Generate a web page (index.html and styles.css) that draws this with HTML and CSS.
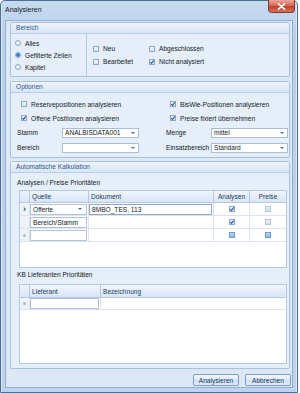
FILE: index.html
```html
<!DOCTYPE html>
<html lang="de">
<head>
  <meta charset="UTF-8" />
  <title>Analysieren</title>
  <link rel="stylesheet" href="styles.css">
</head>
<body>
  <div class="window">
    <div class="titlebar">
      <span class="title">Analysieren</span>
      <span class="close">
        <svg width="9" height="7" viewBox="0 0 9 7"><path d="M1.5 0.8 L7.5 6.2 M7.5 0.8 L1.5 6.2" stroke="#fff" stroke-width="1.6" stroke-linecap="round"/></svg>
      </span>
    </div>

    <div class="client">
      <!-- Bereich -->
      <section class="group g-bereich">
        <div class="group-head">Bereich</div>
        <div class="bereich-body">
          <div class="radios">
            <div class="opt"><span class="radio"></span>Alles</div>
            <div class="opt"><span class="radio on"></span>Gefilterte Zeilen</div>
            <div class="opt"><span class="radio"></span>Kapitel</div>
          </div>
          <div class="checks">
            <div class="opt"><span class="cb"></span>Neu</div>
            <div class="opt"><span class="cb"></span>Abgeschlossen</div>
            <div class="opt"><span class="cb"></span>Bearbeitet</div>
            <div class="opt"><span class="cb on"><svg width="6" height="6" viewBox="0 0 6 6"><path d="M1.2 3 L2.5 4.4 L4.9 1.3" fill="none" stroke="#2d5a97" stroke-width="1.1"/></svg></span>Nicht analysiert</div>
          </div>
        </div>
      </section>

      <!-- Optionen -->
      <section class="group g-optionen">
        <div class="group-head">Optionen</div>
        <div class="optionen-body">
          <div class="col">
            <div class="opt row-check"><span class="cb"></span>Reservepositionen analysieren</div>
            <div class="opt row-check"><span class="cb on"><svg width="6" height="6" viewBox="0 0 6 6"><path d="M1.2 3 L2.5 4.4 L4.9 1.3" fill="none" stroke="#2d5a97" stroke-width="1.1"/></svg></span>Offene Positionen analysieren</div>
            <div class="row-field"><span class="lbl">Stamm</span><span class="combo"><span class="val">ANALBISDATA001</span><span class="arrow"></span></span></div>
            <div class="row-field"><span class="lbl">Bereich</span><span class="combo"><span class="val"></span><span class="arrow"></span></span></div>
          </div>
          <div class="col">
            <div class="opt row-check"><span class="cb on"><svg width="6" height="6" viewBox="0 0 6 6"><path d="M1.2 3 L2.5 4.4 L4.9 1.3" fill="none" stroke="#2d5a97" stroke-width="1.1"/></svg></span>BisWie-Positionen analysieren</div>
            <div class="opt row-check"><span class="cb on"><svg width="6" height="6" viewBox="0 0 6 6"><path d="M1.2 3 L2.5 4.4 L4.9 1.3" fill="none" stroke="#2d5a97" stroke-width="1.1"/></svg></span>Preise fixiert übernehmen</div>
            <div class="row-field"><span class="lbl">Menge</span><span class="combo"><span class="val">mittel</span><span class="arrow"></span></span></div>
            <div class="row-field"><span class="lbl">Einsatzbereich</span><span class="combo"><span class="val">Standard</span><span class="arrow"></span></span></div>
          </div>
        </div>
      </section>

      <!-- Automatische Kalkulation -->
      <section class="group g-auto">
        <div class="group-head">Automatische Kalkulation</div>
        <div class="auto-body">
          <div class="caption">Analysen / Preise Prioritäten</div>
          <div class="grid grid-prio">
            <div class="grow head">
              <span class="c"></span><span class="c">Quelle</span><span class="c">Dokument</span><span class="c mid">Analysen</span><span class="c mid">Preise</span>
            </div>
            <div class="grow">
              <span class="c ind">&#x203A;</span>
              <span class="c"><span class="edit">Offerte<span class="arrow"></span></span></span>
              <span class="c"><span class="edit focus">8MBO_TES, 113</span></span>
              <span class="c mid"><span class="cb on"><svg width="6" height="6" viewBox="0 0 6 6"><path d="M1.2 3 L2.5 4.4 L4.9 1.3" fill="none" stroke="#2d5a97" stroke-width="1.1"/></svg></span></span>
              <span class="c mid"><span class="cb off"></span></span>
            </div>
            <div class="grow">
              <span class="c ind"></span>
              <span class="c"><span class="edit">Bereich/Stamm</span></span>
              <span class="c"></span>
              <span class="c mid"><span class="cb on"><svg width="6" height="6" viewBox="0 0 6 6"><path d="M1.2 3 L2.5 4.4 L4.9 1.3" fill="none" stroke="#2d5a97" stroke-width="1.1"/></svg></span></span>
              <span class="c mid"><span class="cb off"></span></span>
            </div>
            <div class="grow">
              <span class="c ind"><span class="dot"></span></span>
              <span class="c"><span class="edit"></span></span>
              <span class="c"></span>
              <span class="c mid"><span class="cb new"></span></span>
              <span class="c mid"><span class="cb new"></span></span>
            </div>
          </div>

          <div class="caption caption-2">KB Lieferanten Prioritäten</div>
          <div class="grid grid-lief">
            <div class="grow head">
              <span class="c"></span><span class="c">Lieferant</span><span class="c">Bezeichnung</span>
            </div>
            <div class="grow">
              <span class="c ind"><span class="dot"></span></span>
              <span class="c"><span class="edit"></span></span>
              <span class="c"></span>
            </div>
          </div>
        </div>
      </section>

      <div class="buttons">
        <button>Analysieren</button>
        <button>Abbrechen</button>
      </div>
    </div>
  </div>
</body>
</html>
```

FILE: styles.css
```css
* {
  box-sizing: border-box;
}

body {
  margin: 0;
  background: #ffffff;
  font-family: 'Liberation Sans', Arial, sans-serif;
  font-size: 6.6px;
  color: #141b26;
}

.window {
  width: 298px;
  height: 393px;
  display: flex;
  flex-direction: column;
  padding: 0 4px 4px 4px;
  border: 1px solid #4f6d94;
  border-radius: 5px 5px 0 0;
  background: linear-gradient(#c6daf0, #b9d0ea 40px, #bed4ec);
  box-shadow: inset 1px 0 0 #d9e7f6, inset -1px 0 0 #d9e7f6;
}

.titlebar {
  height: 19px;
  display: flex;
  justify-content: space-between;
  align-items: flex-start;
}

.title {
  padding-top: 5px;
  font-size: 7px;
  color: #141b26;
}

.close {
  width: 27px;
  height: 13px;
  margin-top: -1px;
  margin-right: -2px;
  display: flex;
  align-items: center;
  justify-content: center;
  border: 1px solid #7d3a33;
  border-top: none;
  border-radius: 0 0 4px 4px;
  background: linear-gradient(#e9a89b, #d2624e 50%, #c3402a 55%, #d9715b);
}

.client {
  flex: 1;
  display: flex;
  flex-direction: column;
  padding: 1px 2px 0 4px;
  border: 1px solid #94afd2;
  background: #dce8f6;
}

/* group boxes */
.group {
  border: 1px solid #a9c1e0;
  border-radius: 2px;
  background: #e5eefa;
}

.group-head {
  height: 11px;
  padding-left: 5px;
  line-height: 10px;
  color: #34588a;
  border-bottom: 1px solid #b9cde7;
  background: linear-gradient(#edf3fb, #d9e6f6);
}

.g-bereich {
  height: 55px;
}

.g-optionen {
  height: 77px;
  margin-top: 4px;
}

.g-auto {
  height: 208px;
  margin-top: 3px;
}

.opt {
  display: flex;
  align-items: center;
  gap: 4px;
  white-space: nowrap;
}

.radio {
  width: 6px;
  height: 6px;
  border-radius: 50%;
  border: 1px solid #8aa6cc;
  background: radial-gradient(#ffffff, #dfe8f4);
}

.radio.on {
  background: radial-gradient(circle, #2f79cf 0 1.4px, #a9c8ee 2px, #e6f0fb 3px);
}

.cb {
  width: 6px;
  height: 6px;
  flex: none;
  display: flex;
  align-items: center;
  justify-content: center;
  border: 1px solid #8ea9cf;
  background: linear-gradient(#f3f6fb, #d8e3f1);
}

.cb svg {
  display: block;
  margin: -1px;
}

.cb.off {
  border-color: #b7c6da;
  background: linear-gradient(#eef1f5, #d7dee8);
}

.cb.new {
  border-color: #6c9bd6;
  background: linear-gradient(#bcd6f4, #8db7e8);
}

/* Bereich */
.bereich-body {
  height: 42px;
  display: flex;
}

.radios {
  width: 76px;
  padding: 3px 0 0 4px;
  border-right: 1px solid #b8cbe4;
}

.radios .opt {
  height: 12px;
}

.checks {
  padding-left: 6px;
  display: grid;
  grid-template-columns: 56px auto;
  grid-auto-rows: 13px;
  align-content: center;
}

/* Optionen */
.optionen-body {
  display: flex;
  padding: 4px 0 0 6px;
}

.col {
  display: flex;
  flex-direction: column;
}

.col:first-child {
  width: 149px;
}

.row-check {
  height: 14px;
  padding-left: 4px;
}

.row-field {
  height: 15px;
  display: flex;
  align-items: center;
}

.lbl {
  width: 45px;
}

.combo {
  width: 77px;
  height: 10px;
  display: flex;
  align-items: center;
  justify-content: space-between;
  padding: 0 3px 0 2px;
  border: 1px solid #a8bedb;
  background: #ffffff;
}

.arrow {
  width: 0;
  height: 0;
  border-left: 2px solid transparent;
  border-right: 2px solid transparent;
  border-top: 2px solid #4d6f9c;
}

/* Automatische Kalkulation */
.auto-body {
  padding: 0 2px 0 8px;
}

.caption {
  height: 17px;
  padding: 6px 0 0 0;
  line-height: 8px;
  margin-left: -2px;
}

.caption-2 {
  height: 16px;
  padding-top: 3px;
}

.grid {
  border: 1px solid #b5c8e2;
  background: #ffffff;
}

.grid-prio {
  height: 78px;
}

.grid-lief {
  height: 80px;
}

.grow {
  display: grid;
  height: 13px;
  border-bottom: 1px solid #dbe4f0;
}

.grid-prio .grow {
  grid-template-columns: 10px 59px 125px 36px 1fr;
}

.grid-lief .grow {
  grid-template-columns: 10px 71px 1fr;
}

.grow.head {
  height: 12px;
  color: #1e3b63;
  border-bottom: 1px solid #b5c8e2;
  background: linear-gradient(#f0f5fc, #d9e5f5);
}

.grid-lief .grow.head {
  height: 13px;
}

.grid-lief .grow:not(.head) {
  height: 12px;
}

.c {
  display: flex;
  align-items: center;
  padding-left: 2px;
  border-right: 1px solid #dbe4f0;
  overflow: hidden;
  white-space: nowrap;
}

.head .c {
  border-right-color: #b5c8e2;
}

.c:last-child {
  border-right: none;
}

.c.mid {
  justify-content: center;
  padding-left: 0;
}

.c.ind {
  justify-content: center;
  padding-left: 0;
  font-size: 9px;
  font-weight: bold;
  color: #2d4f7e;
  background: #eef3fa;
}

.dot {
  width: 3px;
  height: 3px;
  border-radius: 50%;
  background: #a8bcd6;
}

.edit {
  width: calc(100% + 1px);
  height: 11px;
  margin-left: -2px;
  display: flex;
  align-items: center;
  justify-content: space-between;
  padding: 0 4px 0 2px;
  border: 1px solid #b1c3dc;
  background: #ffffff;
}

.edit.focus {
  border-color: #8ea8cc;
}

/* buttons */
.buttons {
  display: flex;
  justify-content: flex-end;
  gap: 6px;
  padding: 5px 0 0 0;
  margin-right: -1px;
}

.buttons button {
  width: 46px;
  height: 12px;
  padding: 0;
  font-family: inherit;
  font-size: 6.6px;
  color: #1e3b63;
  border: 1px solid #7e9cc5;
  border-radius: 2px;
  background: linear-gradient(#f4f8fd, #dce8f6 50%, #cddff3 51%, #e1ecf8);
}
```
